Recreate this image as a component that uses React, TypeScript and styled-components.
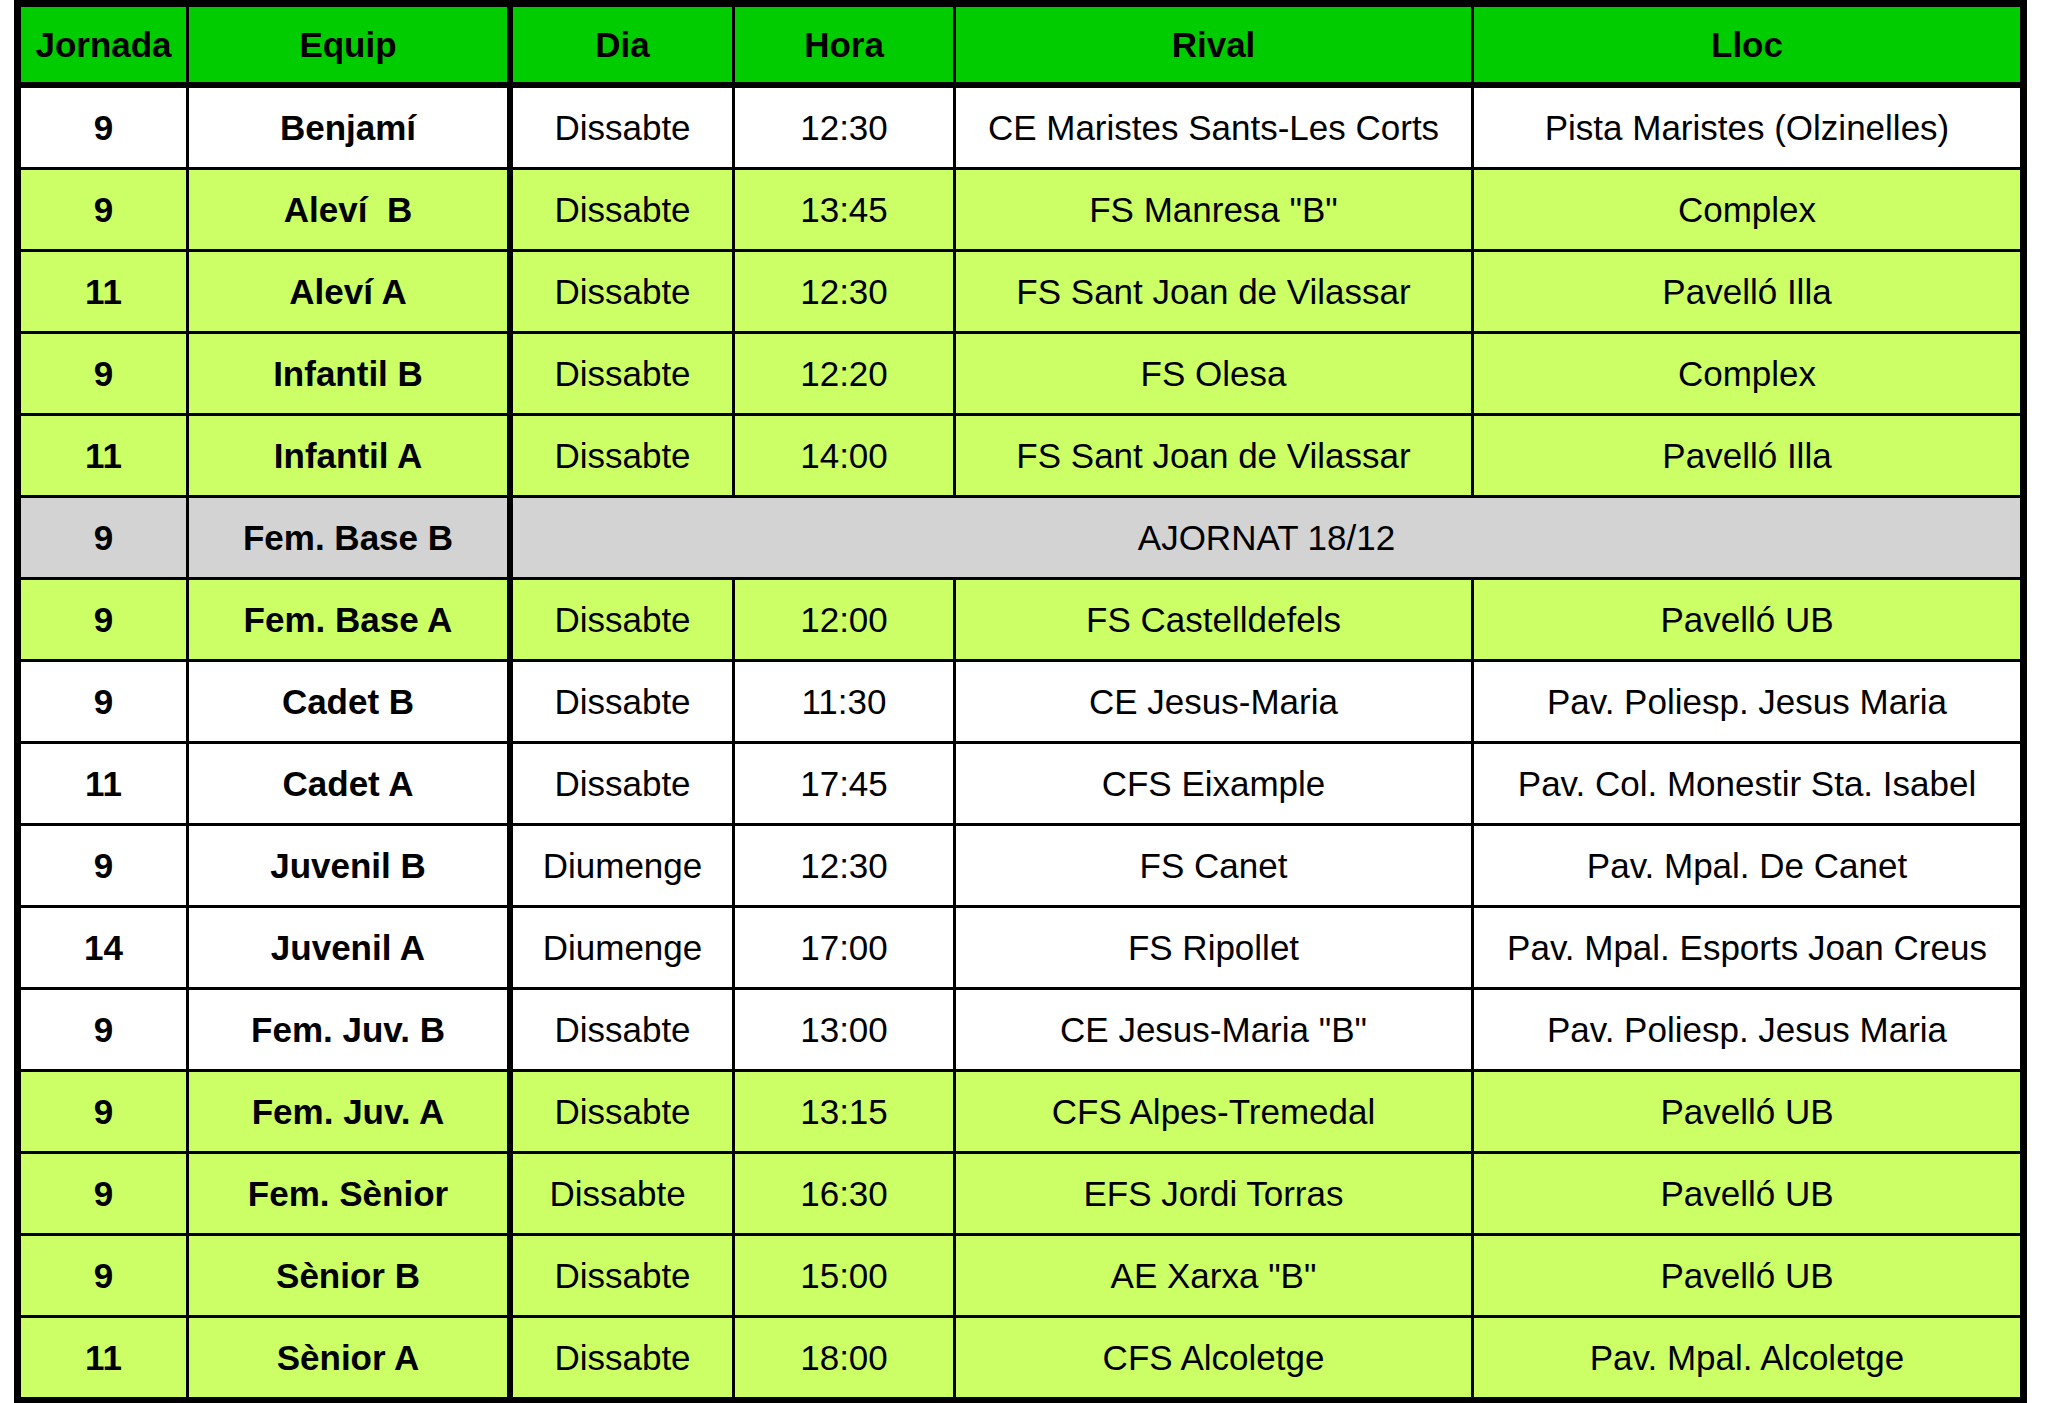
import React from "react";
import styled, { createGlobalStyle, css } from "styled-components";

const Global = createGlobalStyle`
  html, body { margin: 0; padding: 0; background: #ffffff; }
  body { font-family: "Liberation Sans", Arial, sans-serif; }
`;

type Tone = "white" | "green" | "gray";

const toneBg: Record<Tone, string> = {
  white: "#ffffff",
  green: "#ccff66",
  gray: "#d3d3d3",
};

const Board = styled.div`
  margin-left: 14px;
  width: 2013px;
  box-sizing: border-box;
  border: 7px solid #000;
  display: grid;
  grid-template-columns: 168px 324px 222px 221px 518px 546px;
  grid-template-rows: 81px repeat(15, 82px) 79px;
  color: #000;
`;

const Cell = styled.div<{ $tone?: Tone; $bold?: boolean; $thick?: boolean; $last?: boolean; $bottom?: boolean; $span?: number }>`
  box-sizing: border-box;
  display: flex;
  align-items: center;
  justify-content: center;
  white-space: pre;
  font-size: 35px;
  font-weight: ${(p) => (p.$bold ? 700 : 400)};
  background: ${(p) => toneBg[p.$tone ?? "white"]};
  border-right: ${(p) => (p.$last ? "0" : p.$thick ? "6px" : "3px")} solid #000;
  border-bottom: ${(p) => (p.$bottom ? "0" : "3px")} solid #000;
  ${(p) => p.$span && css`grid-column: span ${p.$span};`}
`;

const HeadCell = styled(Cell)`
  background: #00cc00;
  font-weight: 700;
  border-bottom: 6px solid #000;
`;

type Row = {
  j: string;
  team: string;
  tone: Tone;
  dia?: string;
  hora?: string;
  rival?: string;
  lloc?: string;
  note?: string;
};

const rows: Row[] = [
  { j: "9", team: "Benjamí", tone: "white", dia: "Dissabte", hora: "12:30", rival: "CE Maristes Sants-Les Corts", lloc: "Pista Maristes (Olzinelles)" },
  { j: "9", team: "Aleví  B", tone: "green", dia: "Dissabte", hora: "13:45", rival: 'FS Manresa "B"', lloc: "Complex" },
  { j: "11", team: "Aleví A", tone: "green", dia: "Dissabte", hora: "12:30", rival: "FS Sant Joan de Vilassar", lloc: "Pavelló Illa" },
  { j: "9", team: "Infantil B", tone: "green", dia: "Dissabte", hora: "12:20", rival: "FS Olesa", lloc: "Complex" },
  { j: "11", team: "Infantil A", tone: "green", dia: "Dissabte", hora: "14:00", rival: "FS Sant Joan de Vilassar", lloc: "Pavelló Illa" },
  { j: "9", team: "Fem. Base B", tone: "gray", note: "AJORNAT 18/12" },
  { j: "9", team: "Fem. Base A", tone: "green", dia: "Dissabte", hora: "12:00", rival: "FS Castelldefels", lloc: "Pavelló UB" },
  { j: "9", team: "Cadet B", tone: "white", dia: "Dissabte", hora: "11:30", rival: "CE Jesus-Maria", lloc: "Pav. Poliesp. Jesus Maria" },
  { j: "11", team: "Cadet A", tone: "white", dia: "Dissabte", hora: "17:45", rival: "CFS Eixample", lloc: "Pav. Col. Monestir Sta. Isabel" },
  { j: "9", team: "Juvenil B", tone: "white", dia: "Diumenge", hora: "12:30", rival: "FS Canet", lloc: "Pav. Mpal. De Canet" },
  { j: "14", team: "Juvenil A", tone: "white", dia: "Diumenge", hora: "17:00", rival: "FS Ripollet", lloc: "Pav. Mpal. Esports Joan Creus" },
  { j: "9", team: "Fem. Juv. B", tone: "white", dia: "Dissabte", hora: "13:00", rival: 'CE Jesus-Maria "B"', lloc: "Pav. Poliesp. Jesus Maria" },
  { j: "9", team: "Fem. Juv. A", tone: "green", dia: "Dissabte", hora: "13:15", rival: "CFS Alpes-Tremedal", lloc: "Pavelló UB" },
  { j: "9", team: "Fem. Sènior", tone: "green", dia: "Dissabte ", hora: "16:30", rival: "EFS Jordi Torras", lloc: "Pavelló UB" },
  { j: "9", team: "Sènior B", tone: "green", dia: "Dissabte", hora: "15:00", rival: 'AE Xarxa "B"', lloc: "Pavelló UB" },
  { j: "11", team: "Sènior A", tone: "green", dia: "Dissabte", hora: "18:00", rival: "CFS Alcoletge", lloc: "Pav. Mpal. Alcoletge" },
];

const headers = ["Jornada", "Equip", "Dia", "Hora", "Rival", "Lloc"];

export default function App() {
  return (
    <>
      <Global />
      <Board>
        {headers.map((h, i) => (
          <HeadCell key={h} $thick={i === 1} $last={i === 5}>
            {h}
          </HeadCell>
        ))}
        {rows.map((r, idx) => {
          const bottom = idx === rows.length - 1;
          return (
            <React.Fragment key={idx}>
              <Cell $tone={r.tone} $bold $bottom={bottom}>{r.j}</Cell>
              <Cell $tone={r.tone} $bold $thick $bottom={bottom}>{r.team}</Cell>
              {r.note ? (
                <Cell $tone={r.tone} $span={4} $last $bottom={bottom}>{r.note}</Cell>
              ) : (
                <>
                  <Cell $tone={r.tone} $bottom={bottom}>{r.dia}</Cell>
                  <Cell $tone={r.tone} $bottom={bottom}>{r.hora}</Cell>
                  <Cell $tone={r.tone} $bottom={bottom}>{r.rival}</Cell>
                  <Cell $tone={r.tone} $last $bottom={bottom}>{r.lloc}</Cell>
                </>
              )}
            </React.Fragment>
          );
        })}
      </Board>
    </>
  );
}
